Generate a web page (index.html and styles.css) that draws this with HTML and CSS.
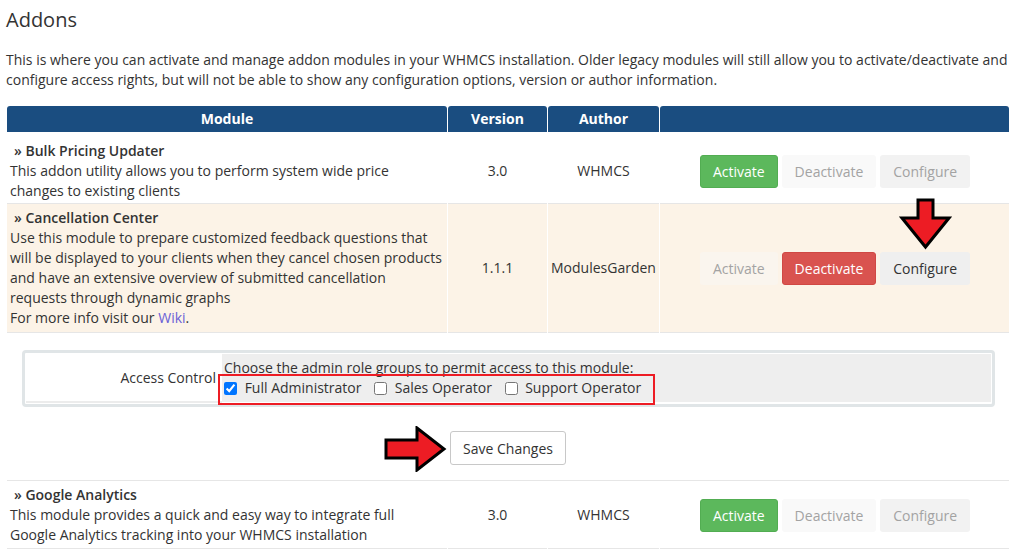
FILE: index.html
```html
<!DOCTYPE html>
<html lang="en">
<head>
    <meta charset="UTF-8">
    <title>Addons</title>
    <link rel="stylesheet" href="styles.css">
</head>
<body>
<div class="page">
    <h1 class="title">Addons</h1>
    <p class="intro">This is where you can activate and manage addon modules in your WHMCS installation. Older legacy modules will still allow you to activate/deactivate and configure access rights, but will not be able to show any configuration options, version or author information.</p>

    <table class="datatable">
        <tr>
            <th class="col-module">Module</th>
            <th class="col-version">Version</th>
            <th class="col-author">Author</th>
            <th class="col-actions"></th>
        </tr>
        <tr class="row-first">
            <td class="module-cell">
                <strong class="module-name">&raquo; Bulk Pricing Updater</strong><br>
                This addon utility allows you to perform system wide price changes to existing clients
            </td>
            <td class="center">3.0</td>
            <td class="center">WHMCS</td>
            <td class="center">
                <div class="btn-group">
                    <button class="btn btn-success">Activate</button>
                    <button class="btn btn-off">Deactivate</button>
                    <button class="btn btn-off btn-grey">Configure</button>
                </div>
            </td>
        </tr>
        <tr class="row-active">
            <td class="module-cell">
                <strong class="module-name">&raquo; Cancellation Center</strong><br>
                Use this module to prepare customized feedback questions that will be displayed to your clients when they cancel chosen products and have an extensive overview of submitted cancellation requests through dynamic graphs<br>
                For more info visit our <a href="#" class="wiki">Wiki</a>.
            </td>
            <td class="center">1.1.1</td>
            <td class="center">ModulesGarden</td>
            <td class="center actions-cell">
                <div class="btn-group">
                    <button class="btn btn-off btn-faded">Activate</button>
                    <button class="btn btn-danger">Deactivate</button>
                    <button class="btn btn-default">Configure</button>
                </div>
                <svg class="arrow-down" width="53" height="52" viewBox="0 0 53 52">
                    <polygon points="19,2 34,2 34,20 50,20 26.5,49 3,20 19,20" fill="#ed1c24" stroke="#000" stroke-width="3"/>
                </svg>
            </td>
        </tr>
        <tr class="row-config">
            <td colspan="4">
                <div class="config-box">
                    <table class="form-table">
                        <tr>
                            <td class="field-label">Access Control</td>
                            <td class="field-area">
                                Choose the admin role groups to permit access to this module:<br>
                                <span class="roles">
                                    <label><input type="checkbox" checked> Full Administrator</label>
                                    <label><input type="checkbox"> Sales Operator</label>
                                    <label><input type="checkbox"> Support Operator</label>
                                </span>
                                <span class="highlight"></span>
                            </td>
                        </tr>
                    </table>
                </div>
                <div class="save-row">
                    <span class="save-wrap">
                        <svg class="arrow-right" width="64" height="46" viewBox="0 0 64 46">
                            <polygon points="2,14 33,14 33,2 60,23 33,44 33,32 2,32" fill="#ed1c24" stroke="#000" stroke-width="3"/>
                        </svg>
                        <button class="btn btn-save">Save Changes</button>
                    </span>
                </div>
            </td>
        </tr>
        <tr class="row-last">
            <td class="module-cell">
                <strong class="module-name">&raquo; Google Analytics</strong><br>
                This module provides a quick and easy way to integrate full Google Analytics tracking into your WHMCS installation
            </td>
            <td class="center">3.0</td>
            <td class="center">WHMCS</td>
            <td class="center">
                <div class="btn-group">
                    <button class="btn btn-success">Activate</button>
                    <button class="btn btn-off">Deactivate</button>
                    <button class="btn btn-off btn-grey">Configure</button>
                </div>
            </td>
        </tr>
    </table>
</div>
</body>
</html>
```

FILE: styles.css
```css
body {
    margin: 0;
    font-family: "Open Sans", Arial, sans-serif;
    font-size: 14px;
    color: #333;
    background: #fff;
}
.page {
    padding: 0 10px 0 6px;
}
.title {
    margin: 0;
    padding-top: 8px;
    font-size: 20px;
    line-height: 24px;
    font-weight: 400;
}
.intro {
    margin: 18px 0 16px 0;
    line-height: 20px;
}
.datatable {
    width: 100%;
    border-collapse: separate;
    border-spacing: 1px 0;
    line-height: 20px;
    table-layout: fixed;
}
.datatable th {
    background: #1a4d80;
    color: #fff;
    font-weight: 700;
    height: 26px;
    padding: 0;
    border-radius: 3px 3px 0 0;
    border-bottom: 1px solid #fff;
}
.col-module { width: 440px; }
.col-version { width: 99px; }
.col-author { width: 111px; }
.datatable td {
    border-bottom: 1px solid #e6e6e6;
    padding: 3px;
    vertical-align: middle;
}
.datatable .module-cell {
    padding-right: 5px;
}
.row-first td {
    padding-top: 8px;
    padding-bottom: 2px;
}
.row-active td {
    background: #fcf3e7;
    padding-top: 4px;
    padding-bottom: 4px;
}
.row-config td {
    padding: 17px 0 0 0;
}
.row-last td {
    padding-top: 4px;
    padding-bottom: 3px;
}
.module-name {
    margin-left: 4px;
    font-weight: 600;
}
.center {
    text-align: center;
}
.wiki {
    color: #6a5fd6;
    text-decoration: none;
}
.actions-cell {
    position: relative;
}
.btn-group {
    display: inline-flex;
    gap: 4px;
    margin-left: 1px;
}
.btn {
    font-family: "Open Sans", Arial, sans-serif;
    font-size: 14px;
    height: 33px;
    padding: 0 12px;
    border: 1px solid transparent;
    border-radius: 3px;
    cursor: pointer;
    line-height: 31px;
}
.btn-success {
    background: #5cb85c;
    border-color: #52ad52;
    color: #fff;
}
.btn-danger {
    background: #d9534f;
    border-color: #d04844;
    color: #fff;
}
.btn-default {
    background: #efefef;
    color: #333;
}
.btn-off {
    background: #f9f9f9;
    color: #a3a3a3;
}
.btn-grey {
    background: #f2f2f2;
}
.btn-faded {
    background: #faf5ee;
}
.arrow-down {
    position: absolute;
    right: 57px;
    top: -6px;
}
.config-box {
    margin: 0 14px 0 15px;
    border: 3px solid #e0e5e7;
    border-radius: 4px;
    padding: 1px;
}
.datatable .form-table td {
    padding: 0;
    border-bottom: none;
}
.form-table {
    width: 100%;
    border-collapse: collapse;
    line-height: 20px;
}
.datatable .form-table .field-label {
    width: 190px;
    text-align: right;
    padding: 0 4px 0 0;
    border-bottom: 2px solid #ececec;
}
.datatable .form-table .field-area {
    position: relative;
    background: #eeeeee;
    padding: 4px 4px 4px 2px;
    border-left: 2px solid #fff;
}
.roles label {
    margin-right: 9px;
}
.roles input {
    width: 13px;
    height: 13px;
    margin: 0 4px 0 0;
    vertical-align: -2px;
}
.highlight {
    position: absolute;
    left: -4px;
    top: 20px;
    width: 433px;
    height: 27px;
    border: 2px solid #ed1c24;
}
.save-row {
    text-align: center;
    padding: 24px 0 15px 0;
}
.save-wrap {
    position: relative;
    display: inline-block;
}
.btn-save {
    background: #fff;
    border: 1px solid #c8c8c8;
    color: #333;
    height: 34px;
    padding: 0 12px;
    vertical-align: top;
}
.arrow-right {
    position: absolute;
    left: -66px;
    top: -5px;
}
```
